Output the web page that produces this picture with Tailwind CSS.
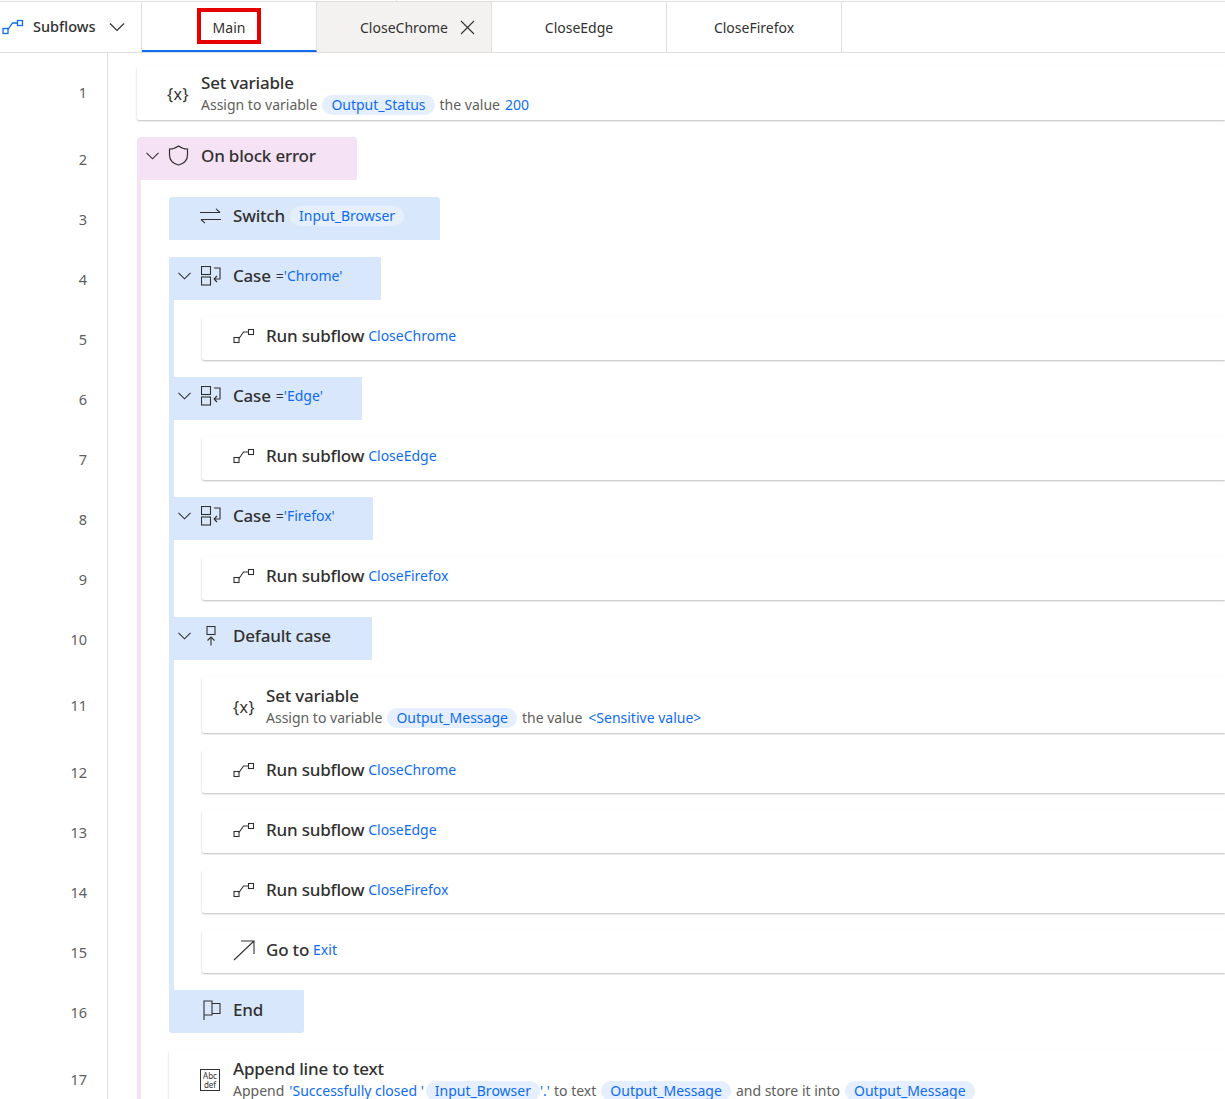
<!DOCTYPE html>
<html lang="en">
<head>
    <meta charset="UTF-8">
    <title>Main</title>
    <script src="https://cdn.jsdelivr.net/npm/@tailwindcss/browser@4"></script>
</head>
<body class="relative h-[1099px] overflow-hidden bg-white font-['Noto_Sans',sans-serif] text-[#323130]">
    <div class="absolute left-[396px] top-0 h-px w-px bg-[#e1dfdd]"></div>
    <!-- tab bar -->
    <nav class="mt-px flex h-[52px] border-y border-[#e1dfdd] text-[14px]">
        <div class="flex w-[142px] items-center border-r border-[#e1dfdd] pl-[2px]">
            <svg class="h-[16px] w-[22px] text-[#0f6cf0]" viewBox="0 0 22 16" fill="none" stroke="currentColor" stroke-width="1.300"><rect x="1" y="9.500" width="5" height="5"/><rect x="15.500" y="1.500" width="5" height="5"/><path d="M6 10.500L10.500 4h5"/></svg>
            <span class="ml-[9px] text-[14.5px] font-medium">Subflows</span>
            <svg class="ml-[13px] h-[10px] w-[16px]" viewBox="0 0 16 10" fill="none" stroke="#323130" stroke-width="1.200"><path d="M1 1.500l7 7 7-7"/></svg>
        </div>
        <div class="flex w-[175px] items-center justify-center border-b-2 border-b-[#0f6cf0] border-r border-r-[#e1dfdd] pt-[2px]">Main</div>
        <div class="flex w-[175px] items-center gap-[12px] border-r border-[#e1dfdd] bg-[#f3f2f1] pl-[43px]">
            <span>CloseChrome</span>
            <svg class="h-[15px] w-[15px]" viewBox="0 0 15 15" fill="none" stroke="#323130" stroke-width="1.100"><path d="M1 1l13 13M14 1L1 14"/></svg>
        </div>
        <div class="flex w-[175px] items-center justify-center border-r border-[#e1dfdd]">CloseEdge</div>
        <div class="flex w-[175px] items-center justify-center border-r border-[#e1dfdd]">CloseFirefox</div>
    </nav>
    <!-- highlight drawn over the screenshot -->
    <div class="absolute left-[197px] top-[8px] h-[36px] w-[64px] border-[4px] border-[#e60000]"></div>

    <div class="flex">
        <!-- line numbers -->
        <div class="h-[1046px] w-[108px] shrink-0 border-r border-[#e1dfdd] pr-[20px] pt-[13px] text-right text-[14.5px] text-[#605e5c]">
            <div class="flex h-[54px] items-center justify-end">1</div>
            <div class="mt-[18px] flex h-[43px] items-center justify-end">2</div>
            <div class="mt-[17px] flex h-[43px] items-center justify-end">3</div>
            <div class="mt-[17px] flex h-[43px] items-center justify-end">4</div>
            <div class="mt-[17px] flex h-[43px] items-center justify-end">5</div>
            <div class="mt-[17px] flex h-[43px] items-center justify-end">6</div>
            <div class="mt-[17px] flex h-[43px] items-center justify-end">7</div>
            <div class="mt-[17px] flex h-[43px] items-center justify-end">8</div>
            <div class="mt-[17px] flex h-[43px] items-center justify-end">9</div>
            <div class="mt-[17px] flex h-[43px] items-center justify-end">10</div>
            <div class="mt-[17px] flex h-[56px] items-center justify-end">11</div>
            <div class="mt-[17px] flex h-[43px] items-center justify-end">12</div>
            <div class="mt-[17px] flex h-[43px] items-center justify-end">13</div>
            <div class="mt-[17px] flex h-[43px] items-center justify-end">14</div>
            <div class="mt-[17px] flex h-[43px] items-center justify-end">15</div>
            <div class="mt-[17px] flex h-[43px] items-center justify-end">16</div>
            <div class="mt-[18px] flex h-[56px] items-center justify-end">17</div>
        </div>

        <!-- flow -->
        <div class="min-w-0 flex-1 pl-[29px] pt-[13px]">
            <div class="flex h-[54px] items-center rounded-l-[2px] pt-[1px] pl-[30px] shadow-[0_1px_2px_rgba(0,0,0,0.25)]">
                <span class="w-[34px] text-[16px] tracking-[0.5px]">{x}</span>
                <div>
                    <div class="text-[17px] font-medium leading-[22px] tracking-[-0.2px]">Set variable</div>
                    <div class="mt-px flex items-center text-[14px] leading-[20px] text-[#605e5c]">Assign to variable<span class="ml-[5px] rounded-full bg-[#e5efff] px-[9px] text-[#0f6cf0]">Output_Status</span><span class="ml-[5px]">the value</span><span class="ml-[5px] text-[#0f6cf0]">200</span></div>
                </div>
            </div>

            <!-- on block error -->
            <div class="mt-[17px] flex h-[43px] w-[220px] items-center rounded-t-[3px] bg-[#f5e2f5] pb-[6px] pl-[9px]">
                <svg class="h-[8px] w-[13px]" viewBox="0 0 13 8" fill="none" stroke="#323130" stroke-width="1.100"><path d="M.5.800l6 6 6-6"/></svg>
                <svg class="ml-[9px] h-[21px] w-[21px]" viewBox="0 0 21 21" fill="none" stroke="#323130" stroke-width="1.200"><path d="M10.500 1c2.500 2 5.500 3 9 3v6c0 5-3.500 8.500-9 10C5 18.500 1.500 15 1.500 10V4c3.500 0 6.500-1 9-3z"/></svg>
                <span class="ml-[12px] text-[17px] font-medium tracking-[-0.2px]">On block error</span>
            </div>
            <div class="border-l-4 border-[#f5e2f5] pl-[28px]">
                <div class="pt-[17px]">
                    <!-- switch -->
                    <div class="flex h-[43px] w-[271px] items-center rounded-t-[3px] bg-[#d9e7fd] pb-[5px] pl-[31px]">
                        <svg class="h-[16px] w-[21px]" viewBox="0 0 21 16" fill="none" stroke="#323130" stroke-width="1.100"><path d="M0 4.500h20M16 .8l4 3.700M21 11.500H1M5 15.200l-4-3.700"/></svg>
                        <span class="ml-[12px] text-[17px] font-medium tracking-[-0.2px]">Switch</span>
                        <span class="ml-[5px] rounded-full bg-[#e5efff] px-[9px] text-[14px] leading-[20px] text-[#0f6cf0]">Input_Browser</span>
                    </div>
                    <div class="border-l-[5px] border-[#d9e7fd] pb-[17px]">
                        <div class="mt-[17px] flex h-[43px] w-[207px] items-center bg-[#d9e7fd] pb-[5px] pl-[4px]">
                            <svg class="h-[8px] w-[13px]" viewBox="0 0 13 8" fill="none" stroke="#323130" stroke-width="1.100"><path d="M.5.800l6 6 6-6"/></svg>
                            <svg class="ml-[10px] h-[20px] w-[20px]" viewBox="0 0 20 20" fill="none" stroke="#323130" stroke-width="1.100"><rect x=".5" y=".5" width="9" height="8"/><rect x=".5" y="11" width="9" height="8"/><path d="M13 2h6v11h-6M13 13l3-3M13 13l3 3"/></svg>
                            <span class="ml-[12px] text-[17px] font-medium tracking-[-0.2px]">Case</span>
                            <span class="ml-[5px] pb-[2px] text-[14px]">=<span class="text-[#0f6cf0]">'Chrome'</span></span>
                        </div>
                        <div class="ml-[28px] mt-[17px] flex h-[43px] items-center rounded-l-[2px] pb-[5px] pl-[31px] shadow-[0_1px_2px_rgba(0,0,0,0.25)]">
                            <svg class="h-[16px] w-[22px]" viewBox="0 0 22 16" fill="none" stroke="#323130" stroke-width="1.100"><rect x="1" y="9.500" width="5" height="5"/><rect x="15.500" y="1.500" width="5" height="5"/><path d="M6 10.500L10.500 4h5"/></svg>
                            <span class="ml-[11px] text-[17px] font-medium tracking-[-0.2px]">Run subflow</span>
                            <span class="ml-[4px] pb-[2px] text-[14px] text-[#0f6cf0]">CloseChrome</span>
                        </div>

                        <div class="mt-[17px] flex h-[43px] w-[188px] items-center bg-[#d9e7fd] pb-[5px] pl-[4px]">
                            <svg class="h-[8px] w-[13px]" viewBox="0 0 13 8" fill="none" stroke="#323130" stroke-width="1.100"><path d="M.5.800l6 6 6-6"/></svg>
                            <svg class="ml-[10px] h-[20px] w-[20px]" viewBox="0 0 20 20" fill="none" stroke="#323130" stroke-width="1.100"><rect x=".5" y=".5" width="9" height="8"/><rect x=".5" y="11" width="9" height="8"/><path d="M13 2h6v11h-6M13 13l3-3M13 13l3 3"/></svg>
                            <span class="ml-[12px] text-[17px] font-medium tracking-[-0.2px]">Case</span>
                            <span class="ml-[5px] pb-[2px] text-[14px]">=<span class="text-[#0f6cf0]">'Edge'</span></span>
                        </div>
                        <div class="ml-[28px] mt-[17px] flex h-[43px] items-center rounded-l-[2px] pb-[5px] pl-[31px] shadow-[0_1px_2px_rgba(0,0,0,0.25)]">
                            <svg class="h-[16px] w-[22px]" viewBox="0 0 22 16" fill="none" stroke="#323130" stroke-width="1.100"><rect x="1" y="9.500" width="5" height="5"/><rect x="15.500" y="1.500" width="5" height="5"/><path d="M6 10.500L10.500 4h5"/></svg>
                            <span class="ml-[11px] text-[17px] font-medium tracking-[-0.2px]">Run subflow</span>
                            <span class="ml-[4px] pb-[2px] text-[14px] text-[#0f6cf0]">CloseEdge</span>
                        </div>

                        <div class="mt-[17px] flex h-[43px] w-[199px] items-center bg-[#d9e7fd] pb-[5px] pl-[4px]">
                            <svg class="h-[8px] w-[13px]" viewBox="0 0 13 8" fill="none" stroke="#323130" stroke-width="1.100"><path d="M.5.800l6 6 6-6"/></svg>
                            <svg class="ml-[10px] h-[20px] w-[20px]" viewBox="0 0 20 20" fill="none" stroke="#323130" stroke-width="1.100"><rect x=".5" y=".5" width="9" height="8"/><rect x=".5" y="11" width="9" height="8"/><path d="M13 2h6v11h-6M13 13l3-3M13 13l3 3"/></svg>
                            <span class="ml-[12px] text-[17px] font-medium tracking-[-0.2px]">Case</span>
                            <span class="ml-[5px] pb-[2px] text-[14px]">=<span class="text-[#0f6cf0]">'Firefox'</span></span>
                        </div>
                        <div class="ml-[28px] mt-[17px] flex h-[43px] items-center rounded-l-[2px] pb-[5px] pl-[31px] shadow-[0_1px_2px_rgba(0,0,0,0.25)]">
                            <svg class="h-[16px] w-[22px]" viewBox="0 0 22 16" fill="none" stroke="#323130" stroke-width="1.100"><rect x="1" y="9.500" width="5" height="5"/><rect x="15.500" y="1.500" width="5" height="5"/><path d="M6 10.500L10.500 4h5"/></svg>
                            <span class="ml-[11px] text-[17px] font-medium tracking-[-0.2px]">Run subflow</span>
                            <span class="ml-[4px] pb-[2px] text-[14px] text-[#0f6cf0]">CloseFirefox</span>
                        </div>

                        <!-- default case -->
                        <div class="mt-[17px] flex h-[43px] w-[198px] items-center bg-[#d9e7fd] pb-[5px] pl-[4px]">
                            <svg class="h-[8px] w-[13px]" viewBox="0 0 13 8" fill="none" stroke="#323130" stroke-width="1.100"><path d="M.5.800l6 6 6-6"/></svg>
                            <svg class="ml-[14px] h-[20px] w-[12px]" viewBox="0 0 12 20" fill="none" stroke="#323130" stroke-width="1.100"><rect x="2" y=".5" width="8" height="8"/><path d="M6 19.500V11M2.500 14.500L6 11l3.500 3.500"/></svg>
                            <span class="ml-[16px] text-[17px] font-medium tracking-[-0.2px]">Default case</span>
                        </div>
                        <div class="ml-[28px] mt-[17px] flex h-[56px] items-center rounded-l-[2px] pt-[3px] pl-[31px] shadow-[0_1px_2px_rgba(0,0,0,0.25)]">
                            <span class="w-[33px] text-[16px] tracking-[0.5px]">{x}</span>
                            <div>
                                <div class="text-[17px] font-medium leading-[22px] tracking-[-0.2px]">Set variable</div>
                                <div class="mt-px flex items-center text-[14px] leading-[20px] text-[#605e5c]">Assign to variable<span class="ml-[5px] rounded-full bg-[#e5efff] px-[9px] text-[#0f6cf0]">Output_Message</span><span class="ml-[5px]">the value</span><span class="ml-[6px] text-[#0f6cf0]">&lt;Sensitive value&gt;</span></div>
                            </div>
                        </div>
                        <div class="ml-[28px] mt-[17px] flex h-[43px] items-center rounded-l-[2px] pb-[3px] pl-[31px] shadow-[0_1px_2px_rgba(0,0,0,0.25)]">
                            <svg class="h-[16px] w-[22px]" viewBox="0 0 22 16" fill="none" stroke="#323130" stroke-width="1.100"><rect x="1" y="9.500" width="5" height="5"/><rect x="15.500" y="1.500" width="5" height="5"/><path d="M6 10.500L10.500 4h5"/></svg>
                            <span class="ml-[11px] text-[17px] font-medium tracking-[-0.2px]">Run subflow</span>
                            <span class="ml-[4px] pb-[2px] text-[14px] text-[#0f6cf0]">CloseChrome</span>
                        </div>
                        <div class="ml-[28px] mt-[17px] flex h-[43px] items-center rounded-l-[2px] pb-[3px] pl-[31px] shadow-[0_1px_2px_rgba(0,0,0,0.25)]">
                            <svg class="h-[16px] w-[22px]" viewBox="0 0 22 16" fill="none" stroke="#323130" stroke-width="1.100"><rect x="1" y="9.500" width="5" height="5"/><rect x="15.500" y="1.500" width="5" height="5"/><path d="M6 10.500L10.500 4h5"/></svg>
                            <span class="ml-[11px] text-[17px] font-medium tracking-[-0.2px]">Run subflow</span>
                            <span class="ml-[4px] pb-[2px] text-[14px] text-[#0f6cf0]">CloseEdge</span>
                        </div>
                        <div class="ml-[28px] mt-[17px] flex h-[43px] items-center rounded-l-[2px] pb-[3px] pl-[31px] shadow-[0_1px_2px_rgba(0,0,0,0.25)]">
                            <svg class="h-[16px] w-[22px]" viewBox="0 0 22 16" fill="none" stroke="#323130" stroke-width="1.100"><rect x="1" y="9.500" width="5" height="5"/><rect x="15.500" y="1.500" width="5" height="5"/><path d="M6 10.500L10.500 4h5"/></svg>
                            <span class="ml-[11px] text-[17px] font-medium tracking-[-0.2px]">Run subflow</span>
                            <span class="ml-[4px] pb-[2px] text-[14px] text-[#0f6cf0]">CloseFirefox</span>
                        </div>
                        <div class="ml-[28px] mt-[17px] flex h-[43px] items-center rounded-l-[2px] pb-[3px] pl-[31px] shadow-[0_1px_2px_rgba(0,0,0,0.25)]">
                            <svg class="h-[21px] w-[22px]" viewBox="0 0 22 21" fill="none" stroke="#323130" stroke-width="1.100"><path d="M1 20L21 1M8 1h13v13"/></svg>
                            <span class="ml-[11px] text-[17px] font-medium tracking-[-0.2px]">Go to</span>
                            <span class="ml-[4px] pb-[2px] text-[14px] text-[#0f6cf0]">Exit</span>
                        </div>
                    </div>
                    <!-- end -->
                    <div class="flex h-[43px] w-[135px] items-center rounded-b-[3px] bg-[#d9e7fd] pb-[3px] pl-[34px]">
                        <svg class="h-[20px] w-[18px]" viewBox="0 0 18 20" fill="none" stroke="#323130" stroke-width="1.100"><path d="M1 20V1h8v14H1M9 3.500h8v10H9"/></svg>
                        <span class="ml-[12px] text-[17px] font-medium tracking-[-0.2px]">End</span>
                    </div>
                    <!-- append line -->
                    <div class="mt-[17px] flex h-[56px] items-center rounded-l-[2px] pt-[3px] pl-[31px] shadow-[0_1px_2px_rgba(0,0,0,0.25)]">
                        <div class="flex h-[22px] w-[20px] flex-col items-center justify-center border border-[#323130] text-[8px] leading-[9px]"><span>Abc</span><span>def</span></div>
                        <div class="ml-[13px]">
                            <div class="text-[17px] font-medium leading-[22px] tracking-[-0.2px]">Append line to text</div>
                            <div class="mt-px flex items-center whitespace-nowrap text-[14px] leading-[20px] text-[#605e5c]">Append<span class="ml-[5px] text-[#0f6cf0]">'Successfully closed '</span><span class="ml-[2px] rounded-full bg-[#e5efff] px-[9px] text-[#0f6cf0]">Input_Browser</span><span class="text-[#0f6cf0]">'.'</span><span class="ml-[4px]">to text</span><span class="ml-[5px] rounded-full bg-[#e5efff] px-[9px] text-[#0f6cf0]">Output_Message</span><span class="ml-[5px]">and store it into</span><span class="ml-[5px] rounded-full bg-[#e5efff] px-[9px] text-[#0f6cf0]">Output_Message</span></div>
                        </div>
                    </div>
                </div>
            </div>
        </div>
    </div>
</body>
</html>
